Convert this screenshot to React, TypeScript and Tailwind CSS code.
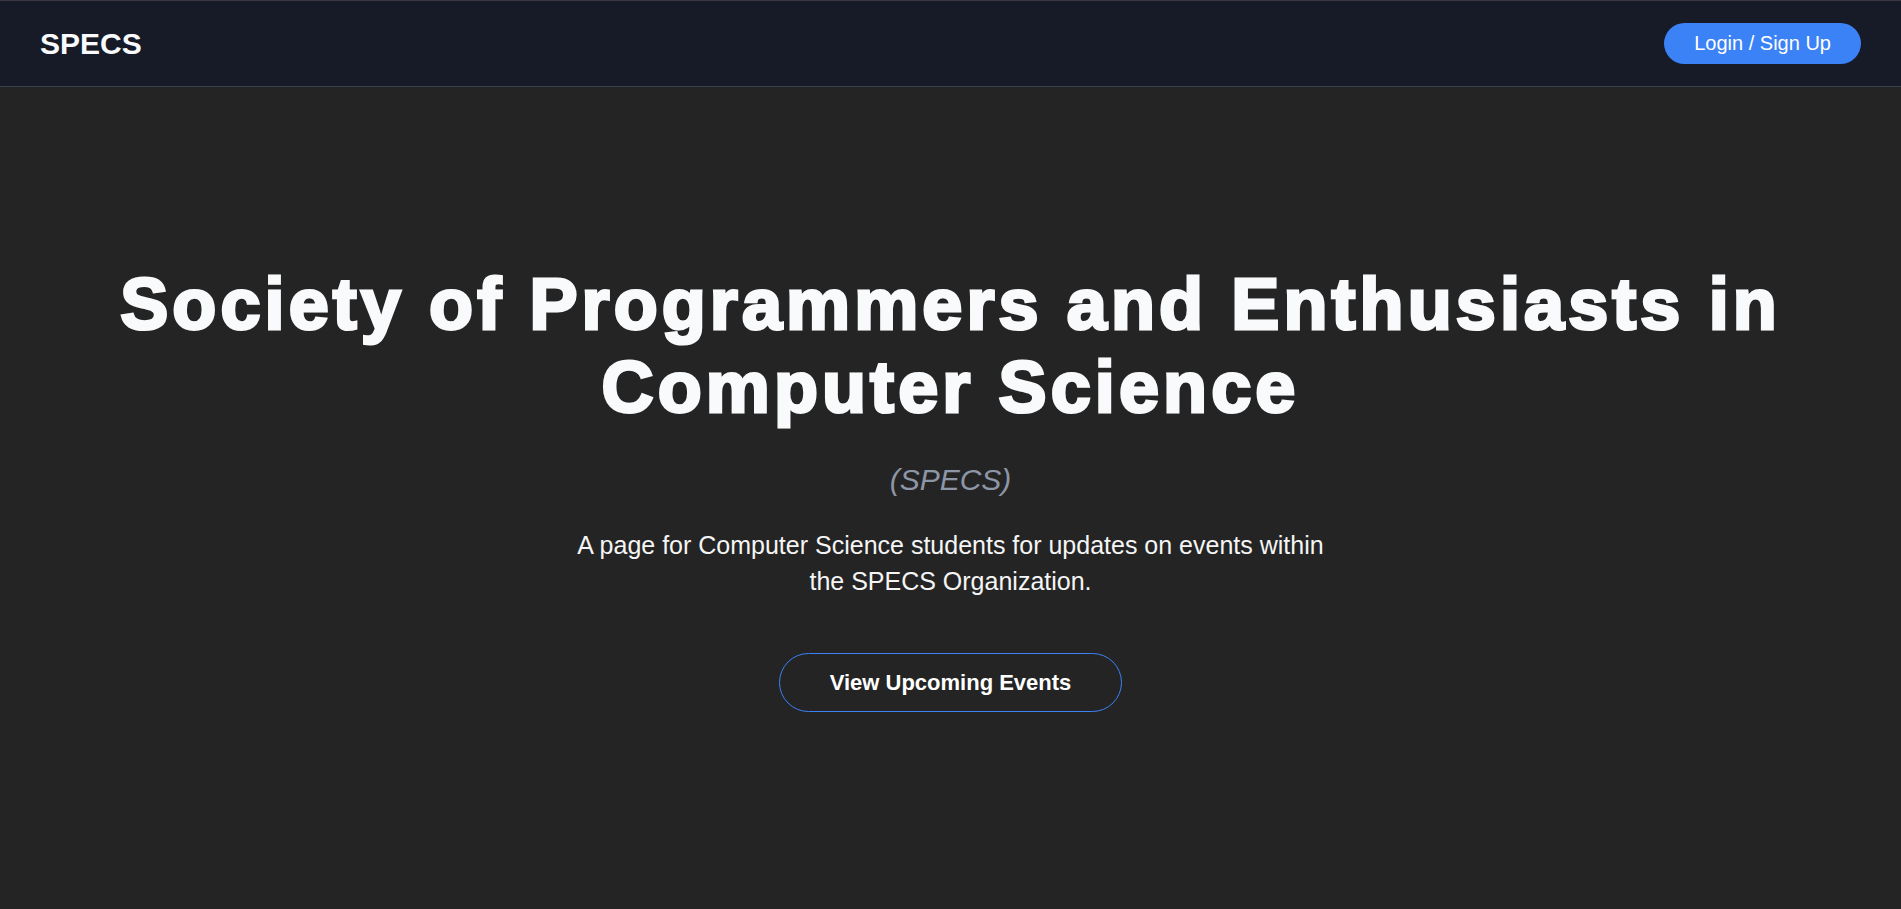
import React from "react";

export default function App() {
  return (
    <div className="min-h-[909px] bg-[#242424] font-['Liberation_Sans',Arial,sans-serif] text-white">
      <header className="flex h-[87px] items-center justify-between border-t border-b border-t-[#3d3742] border-b-[#3a4152] bg-[#171a27] px-10">
        <div className="text-[30px] font-bold leading-none text-[#f8fafc]">SPECS</div>
        <button className="rounded-full bg-[#3b82f6] px-[30px] py-[9px] text-[20px] leading-[23px] text-white">
          Login / Sign Up
        </button>
      </header>
      <main className="flex flex-col items-center px-8 pt-[176px] text-center">
        <h1 className="max-w-[1760px] text-[72px] font-bold leading-[83px] tracking-[0.057em] text-[#f8fafc] [-webkit-text-stroke:3px_#f8fafc]">
          Society of Programmers and Enthusiasts in
          <br />
          Computer Science
        </h1>
        <p className="mt-[30px] text-[30px] italic leading-[42px] text-[#8d96a6]">(SPECS)</p>
        <p className="mt-[26px] max-w-[768px] text-[25px] leading-[36px] text-[#f5f5f5]">
          A page for Computer Science students for updates on events within the SPECS Organization.
        </p>
        <button className="mt-[54px] rounded-full border border-[#3b82f6] px-[50px] py-[15px] text-[22px] font-bold leading-[27px] text-white">
          View Upcoming Events
        </button>
      </main>
    </div>
  );
}
